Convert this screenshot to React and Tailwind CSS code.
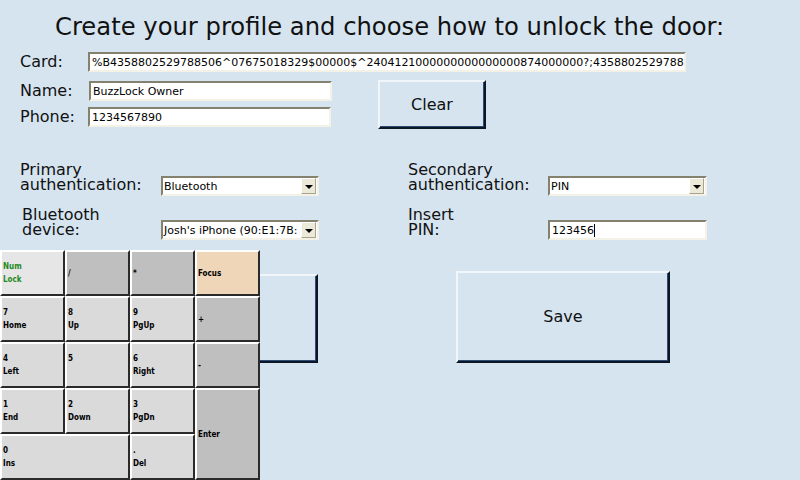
import React from "react";

function Field({ className = "", children }) {
  return (
    <div
      className={`h-[20px] bg-white border-2 border-t-[#84816f] border-l-[#84816f] border-b-[#f4f2e6] border-r-[#f4f2e6] text-[11px] leading-[17px] pl-[2px] overflow-hidden whitespace-nowrap text-black ${className}`}
    >
      {children}
    </div>
  );
}

function Select({ className = "", value }) {
  return (
    <div
      className={`h-[20px] bg-white border-2 border-t-[#84816f] border-l-[#84816f] border-b-[#f4f2e6] border-r-[#f4f2e6] flex items-stretch text-[11px] text-black ${className}`}
    >
      <div className="flex-1 overflow-hidden whitespace-nowrap leading-[17px] pl-[1px]">{value}</div>
      <div className="w-[15px] mr-[1px] bg-[#ece9d8] border border-t-white border-l-white border-b-[#a7a38f] border-r-[#a7a38f] flex items-center justify-center">
        <div className="w-0 h-0 mt-[2px] border-l-[4px] border-r-[4px] border-t-[4px] border-l-transparent border-r-transparent border-t-black" />
      </div>
    </div>
  );
}

const btn =
  "bg-[#d6e4f0] border-t-2 border-l-2 border-b-2 border-r-2 border-t-[#f1f6fb] border-l-[#f1f6fb] border-b-[#0b1626] border-r-[#0b1626] shadow-[inset_-1px_-1px_0_#2c4c75] text-[16px] text-[#111] flex items-center justify-center";

function Key({ a, b, className = "", two = true, textClass = "text-black" }) {
  return (
    <div
      className={`border-2 border-t-white border-l-white border-b-[#2a2a2a] border-r-[#2a2a2a] flex flex-col justify-center pl-[1px] font-['DejaVu_Sans_Condensed','DejaVu_Sans',sans-serif] text-[8px] font-bold leading-[13px] whitespace-pre ${textClass} ${className}`}
    >
      <div>{a}</div>
      {two && <div>{b || " "}</div>}
    </div>
  );
}

export default function App() {
  return (
    <div className="w-[800px] h-[480px] bg-[#d6e4f0] relative overflow-hidden font-['DejaVu_Sans',sans-serif] text-[#111]">
      <h1 className="pt-[13px] pl-[55px] text-[24.25px] leading-[28px] font-normal whitespace-nowrap">
        Create your profile and choose how to unlock the door:
      </h1>

      <div className="mt-[11px] flex items-center h-[20px]">
        <div className="w-[88px] pl-[20px] text-[16px]">Card:</div>
        <Field className="w-[598px]">
          %B4358802529788506^07675018329$00000$^2404121000000000000000874000000?;4358802529788
        </Field>
      </div>

      <div className="mt-[8px] flex items-start">
        <div className="flex flex-col w-[332px]">
          <div className="mt-[1px] flex items-center h-[20px]">
            <div className="w-[89px] pl-[20px] text-[16px]">Name:</div>
            <Field className="w-[243px]">BuzzLock Owner</Field>
          </div>
          <div className="mt-[6px] flex items-center h-[20px]">
            <div className="w-[88px] pl-[20px] text-[16px]">Phone:</div>
            <Field className="w-[243px]">1234567890</Field>
          </div>
        </div>
        <button className={`ml-[46px] w-[108px] h-[49px] ${btn}`}>Clear</button>
      </div>

      <div className="mt-[33px] flex items-start">
        <div className="w-[161px] pl-[20px] text-[16px] leading-[15px] whitespace-nowrap">
          Primary
          <br />
          authentication:
        </div>
        <Select className="mt-[14px] w-[158px]" value="Bluetooth" />
        <div className="ml-[89px] w-[140px] text-[16px] leading-[15px] whitespace-nowrap">
          Secondary
          <br />
          authentication:
        </div>
        <Select className="mt-[14px] w-[159px]" value="PIN" />
      </div>

      <div className="mt-[11px] flex items-start">
        <div className="w-[161px] pl-[22px] text-[16px] leading-[15px] whitespace-nowrap">
          Bluetooth
          <br />
          device:
        </div>
        <Select className="mt-[13px] w-[158px]" value="Josh's iPhone (90:E1:7B:" />
        <div className="ml-[89px] w-[140px] text-[16px] leading-[15px] whitespace-nowrap">
          Insert
          <br />
          PIN:
        </div>
        <Field className="mt-[13px] w-[159px]">
          123456
          <span className="inline-block w-[1px] h-[13px] bg-black align-[-3px]" />
        </Field>
      </div>

      <div className="flex items-start">
        <button className={`ml-[104px] mt-[34px] w-[214px] h-[89px] ${btn}`} />
        <button className={`ml-[138px] mt-[31px] w-[214px] h-[92px] ${btn}`}>Save</button>
      </div>

      <div className="absolute left-0 top-[250px] w-[260px] h-[230px] grid grid-cols-4 grid-rows-5">
        <Key a="Num" b="Lock" className="bg-[#e6e6e6]" textClass="text-[#1f8a1f]" />
        <Key a="/" two={false} className="bg-[#bfbfbf]" />
        <Key a="*" two={false} className="bg-[#bfbfbf]" />
        <Key a="Focus" two={false} className="bg-[#efd6b8]" />
        <Key a="7" b="Home" className="bg-[#dadada]" />
        <Key a="8" b="Up" className="bg-[#dadada]" />
        <Key a="9" b="PgUp" className="bg-[#dadada]" />
        <Key a="+" two={false} className="bg-[#bfbfbf]" />
        <Key a="4" b="Left" className="bg-[#dadada]" />
        <Key a="5" b="" className="bg-[#dadada]" />
        <Key a="6" b="Right" className="bg-[#dadada]" />
        <Key a="-" two={false} className="bg-[#bfbfbf]" />
        <Key a="1" b="End" className="bg-[#dadada]" />
        <Key a="2" b="Down" className="bg-[#dadada]" />
        <Key a="3" b="PgDn" className="bg-[#dadada]" />
        <Key a="Enter" two={false} className="bg-[#bfbfbf] row-span-2" />
        <Key a="0" b="Ins" className="bg-[#dadada] col-span-2" />
        <Key a="." b="Del" className="bg-[#dadada]" />
      </div>
    </div>
  );
}
